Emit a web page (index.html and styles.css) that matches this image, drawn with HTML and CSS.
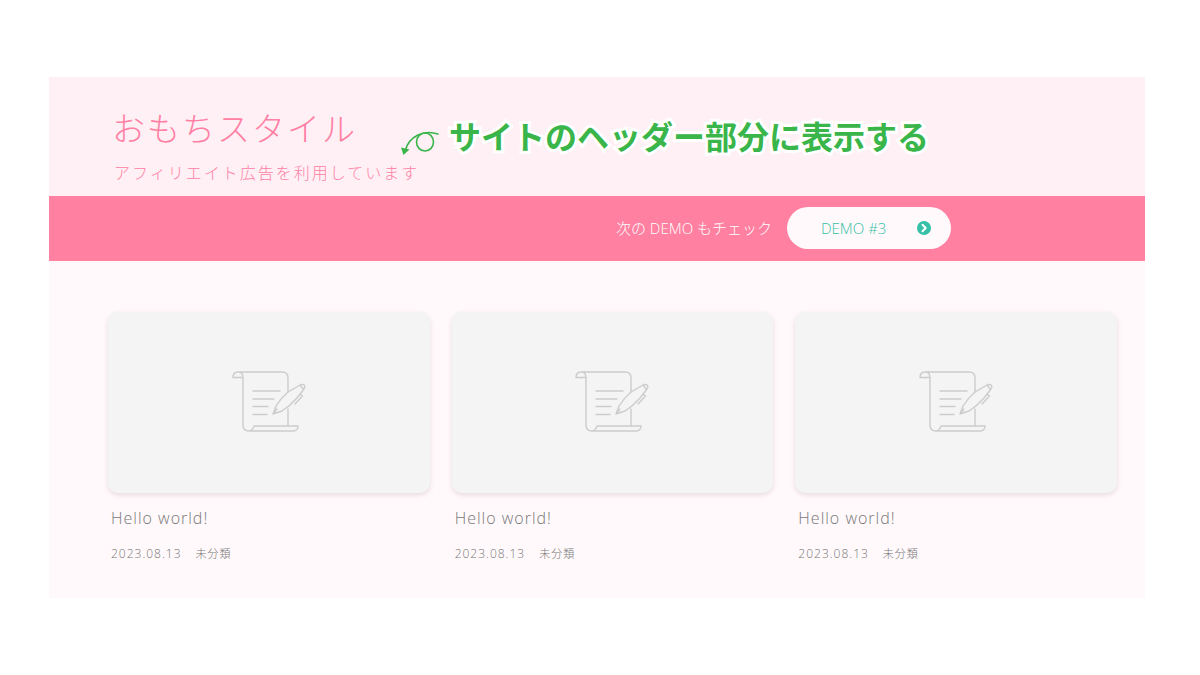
FILE: index.html
```
<!DOCTYPE html>
<html lang="ja">
<head>
    <meta charset="UTF-8">
    <meta name="viewport" content="width=device-width, initial-scale=1.0">
    <title>おもちスタイル</title>
    <link rel="stylesheet" href="styles.css">
</head>
<body>
    <!-- icons -->
    <svg class="sprite" aria-hidden="true">
        <symbol id="icon-post" viewBox="0 0 76 64">
            <path d="M12 7.500H2C2 4 4 2 7 2H51Q57 2 57 8V22M57 39V55.500M7 2Q12 2 12 8V55Q12 61 18 61H62Q67 61 67 56H23C22 59 21 61 18 61"/>
            <path d="M22 21H49M22 29H43M22 36.500H37M22 44.500H36"/>
            <path d="M42 44L45 36Q50 28 57 22L70 14.500Q72 14 73.500 15.500Q74.500 17 73 19L66 28Q59 36 51 41ZM42 44L46 39M69 15L72.500 19.500M69 24L71.500 26L64 34"/>
        </symbol>
    </svg>
    <div class="site">
        <header class="header">
            <h1 class="site-title"><a href="#">おもちスタイル</a></h1>
            <p class="site-desc">アフィリエイト広告を利用しています</p>
            <div class="note">
                <svg class="note-arrow" viewBox="0 0 40 28" aria-hidden="true">
                    <path class="line" d="M37 5C22 0 8 8 4.500 21"/>
                    <ellipse class="line" cx="24" cy="13" rx="8.500" ry="9"/>
                    <path class="head" d="M0 18.500L8.500 20.500L2.500 26Z"/>
                </svg>
                <strong class="note-text">サイトのヘッダー部分に表示する</strong>
            </div>
        </header>
        <nav class="demo-nav">
            <span class="demo-label">次の DEMO もチェック</span>
            <a class="demo-btn" href="#">
                <span>DEMO #3</span>
                <svg class="demo-icon" viewBox="0 0 14 14" aria-hidden="true">
                    <circle cx="7" cy="7" r="7"/>
                    <path d="M5.500 3.800L8.700 7L5.500 10.200"/>
                </svg>
            </a>
        </nav>
        <main class="posts">
            <article class="post">
                <a class="post-link" href="#">
                    <div class="thumb"><svg class="thumb-icon" aria-hidden="true"><use href="#icon-post"/></svg></div>
                    <h2 class="post-title">Hello world!</h2>
                </a>
                <p class="post-meta"><time datetime="2023-08-13">2023.08.13</time><span class="cat">未分類</span></p>
            </article>
            <article class="post">
                <a class="post-link" href="#">
                    <div class="thumb"><svg class="thumb-icon" aria-hidden="true"><use href="#icon-post"/></svg></div>
                    <h2 class="post-title">Hello world!</h2>
                </a>
                <p class="post-meta"><time datetime="2023-08-13">2023.08.13</time><span class="cat">未分類</span></p>
            </article>
            <article class="post">
                <a class="post-link" href="#">
                    <div class="thumb"><svg class="thumb-icon" aria-hidden="true"><use href="#icon-post"/></svg></div>
                    <h2 class="post-title">Hello world!</h2>
                </a>
                <p class="post-meta"><time datetime="2023-08-13">2023.08.13</time><span class="cat">未分類</span></p>
            </article>
        </main>
    </div>
</body>
</html>
```
FILE: styles.css
```
*{
    box-sizing: border-box;
}
body{
    margin: 0;
    padding: 77px 55px 77px 49px;
    background: #fff;
    color: #777;
    font-family: "Open Sans", "Noto Sans CJK JP", sans-serif;
    font-weight: 300;
}
h1,
h2,
p{
    margin: 0;
    font-weight: 300;
}
a{
    color: inherit;
    text-decoration: none;
}
.sprite{
    position: absolute;
    width: 0;
    height: 0;
}
.site{
    background: #fff9fb;
}

/* header */
.header{
    position: relative;
    padding: 28px 64px 11px 63px;
    background: #fff0f5;
    color: #ff80a4;
}
.site-title{
    font-size: 33px;
    line-height: 48px;
    letter-spacing: 2px;
}
.site-desc{
    margin-top: 8px;
    padding-left: 2px;
    font-size: 16px;
    line-height: 24px;
    letter-spacing: 2px;
}
.note{
    position: absolute;
    top: 36px;
    left: 352px;
    display: flex;
    align-items: center;
    gap: 8px;
    white-space: nowrap;
}
.note-arrow{
    width: 40px;
    height: 28px;
    margin-top: 12px;
}
.note-arrow .line{
    fill: none;
    stroke: #39b54a;
    stroke-width: 1.6;
    stroke-linecap: round;
}
.note-arrow .head{
    fill: #39b54a;
}
.note-text{
    color: #39b54a;
    font-size: 32px;
    line-height: 48px;
    font-weight: 700;
    -webkit-text-stroke: 6px #fff;
    paint-order: stroke fill;
}

/* demo bar */
.demo-nav{
    display: flex;
    justify-content: flex-end;
    align-items: center;
    gap: 15px;
    padding: 11px 194px 12px 64px;
    background: #ff80a0;
    color: #fff;
    font-size: 15px;
    line-height: 20px;
}
.demo-btn{
    display: flex;
    justify-content: space-between;
    align-items: center;
    width: 164px;
    height: 42px;
    padding: 0 20px 0 34px;
    border-radius: 21px;
    background: #fff9fb;
    color: #36c0a8;
}
.demo-icon{
    width: 14px;
    height: 14px;
    fill: #36c0a8;
}
.demo-icon path{
    fill: none;
    stroke: #fff;
    stroke-width: 2;
    stroke-linecap: round;
    stroke-linejoin: round;
}

/* posts */
.posts{
    display: grid;
    grid-template-columns: repeat(3, 1fr);
    gap: 22px;
    padding: 51px 28px 35px 59px;
}
.post-link{
    display: block;
}
.thumb{
    display: flex;
    justify-content: center;
    align-items: center;
    aspect-ratio: 16 / 9;
    border-radius: 10px;
    background: #f4f4f4;
    box-shadow: 0 2px 5px rgba(120, 60, 80, .16);
}
.thumb-icon{
    width: 76px;
    height: 64px;
    fill: none;
    stroke: #ccc;
    stroke-width: 1.4;
    stroke-linecap: round;
    stroke-linejoin: round;
}
.post-title{
    margin-top: 13px;
    padding-left: 3px;
    font-size: 16px;
    line-height: 24px;
    letter-spacing: 1px;
}
.post-meta{
    display: flex;
    gap: 14px;
    margin-top: 15px;
    padding-left: 3px;
    font-size: 12px;
    line-height: 18px;
    letter-spacing: 1px;
}
.cat{
    font-size: 11px;
}
```
